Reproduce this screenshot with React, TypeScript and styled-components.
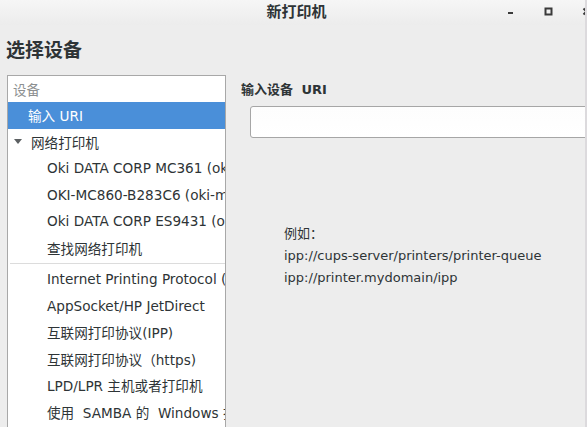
import styled, { createGlobalStyle } from "styled-components";

const GlobalStyle = createGlobalStyle`
  html, body {
    margin: 0;
    padding: 0;
    background: #ededed;
  }
  body {
    font-family: "DejaVu Sans", "Noto Sans CJK SC", sans-serif;
    color: #2e3436;
  }
`;

// 창 전체
const Window = styled.div`
  width: 587px;
  height: 427px;
  display: flex;
  flex-direction: column;
  overflow: hidden;
  background: #ededed;
  border-right: 2px solid #dcdadd;
  box-sizing: border-box;
`;

const TitleBar = styled.div`
  position: relative;
  height: 25px;
  flex-shrink: 0;
  display: flex;
  align-items: center;
  justify-content: center;
  background: linear-gradient(#f6f6f6, #ececec);
`;

const TitleText = styled.div`
  font-family: "Noto Sans CJK SC", sans-serif;
  font-size: 15px;
  font-weight: bold;
  color: #2e3436;
  margin-top: -4px;
  margin-left: 8px;
`;

const Controls = styled.div`
  position: absolute;
  right: -20px;
  top: 4px;
  display: flex;
  align-items: center;
`;

const ControlButton = styled.div`
  width: 37.5px;
  height: 14px;
  display: flex;
  align-items: center;
  justify-content: center;
`;

const Body = styled.div`
  flex: 1;
  min-height: 0;
  display: flex;
  flex-direction: column;
  padding: 0 0 0 7px;
`;

const Heading = styled.h1`
  margin: 9px 0 11px -1px;
  font-family: "Noto Sans CJK SC", sans-serif;
  font-size: 19px;
  font-weight: bold;
  line-height: 30px;
  color: #2e3436;
`;

const Columns = styled.div`
  flex: 1;
  min-height: 0;
  display: flex;
  gap: 15px;
`;

// 왼쪽 장치 목록
const DeviceList = styled.div`
  width: 219px;
  flex-shrink: 0;
  background: #fff;
  border: 1px solid #a8a8a8;
  border-bottom: none;
  box-sizing: border-box;
  overflow: hidden;
`;

const ListHeader = styled.div`
  height: 26px;
  display: flex;
  align-items: center;
  padding-left: 5px;
  font-family: "Noto Sans CJK SC", sans-serif;
  font-size: 13.5px;
  color: #8d9091;
`;

const Row = styled.div<{ $indent: number; $selected?: boolean }>`
  height: 26.5px;
  display: flex;
  align-items: center;
  padding-left: ${(p) => p.$indent}px;
  white-space: pre;
  font-size: 13.6px;
  background: ${(p) => (p.$selected ? "#4a8fd9" : "transparent")};
  color: ${(p) => (p.$selected ? "#fff" : "#2e3436")};
`;

const Expander = styled.span`
  display: inline-block;
  width: 0;
  height: 0;
  border-left: 4px solid transparent;
  border-right: 4px solid transparent;
  border-top: 5px solid #5c6062;
  margin-right: 9px;
`;

const Separator = styled.div`
  height: 1px;
  margin: 2px 0 2px 2px;
  background: #dcdcdc;
`;

// 오른쪽 URI 입력
const Panel = styled.div`
  flex: 1;
  min-width: 0;
  overflow: hidden;
`;

const FieldLabel = styled.div`
  height: 26px;
  display: flex;
  align-items: center;
  font-size: 13px;
  font-weight: bold;
  word-spacing: 4px;
  color: #2e3436;
`;

const UriInput = styled.div`
  margin: 5px 0 0 9px;
  width: 360px;
  height: 32px;
  box-sizing: border-box;
  background: linear-gradient(#fdfdfd, #ffffff);
  border: 1px solid #a6a6a6;
  border-radius: 3px;
`;

const Example = styled.div`
  margin: 85px 0 0 43px;
  font-size: 13px;
  line-height: 22px;
  color: #2e3436;
`;

const deviceRows = [
  "Oki DATA CORP MC361 (oki-mc361)",
  "OKI-MC860-B283C6 (oki-mc860)",
  "Oki DATA CORP ES9431 (oki-es9431)",
  "查找网络打印机",
];

const protocolRows = [
  "Internet Printing Protocol (ipp)",
  "AppSocket/HP JetDirect",
  "互联网打印协议(IPP)",
  "互联网打印协议（https)",
  "LPD/LPR 主机或者打印机",
  "使用  SAMBA 的  Windows 打印机",
];

function App() {
  return (
    <>
      <GlobalStyle />
      <Window>
        <TitleBar>
          <TitleText>新打印机</TitleText>
          <Controls>
            <ControlButton>
              <svg width="8" height="8" viewBox="0 0 8 8">
                <rect x="1" y="5" width="5" height="2" fill="#3a3a3a" />
              </svg>
            </ControlButton>
            <ControlButton>
              <svg width="9" height="9" viewBox="0 0 9 9">
                <rect x="1.5" y="1.5" width="6" height="6" fill="none" stroke="#3a3a3a" strokeWidth="2" />
              </svg>
            </ControlButton>
            <ControlButton>
              <svg width="9" height="9" viewBox="0 0 9 9">
                <path d="M1.5 1.5 L7.5 7.5 M7.5 1.5 L1.5 7.5" stroke="#3a3a3a" strokeWidth="2" />
              </svg>
            </ControlButton>
          </Controls>
        </TitleBar>
        <Body>
          <Heading>选择设备</Heading>
          <Columns>
            <DeviceList>
              <ListHeader>设备</ListHeader>
              <Row $indent={20} $selected>
                输入 URI
              </Row>
              <Row $indent={6}>
                <Expander />
                网络打印机
              </Row>
              {deviceRows.map((label, i) => (
                <Row key={i} $indent={39}>
                  {label}
                </Row>
              ))}
              <Separator />
              {protocolRows.map((label, i) => (
                <Row key={i} $indent={39}>
                  {label}
                </Row>
              ))}
            </DeviceList>
            <Panel>
              <FieldLabel>输入设备 URI</FieldLabel>
              <UriInput />
              <Example>
                <div>例如：</div>
                <div>ipp://cups-server/printers/printer-queue</div>
                <div>ipp://printer.mydomain/ipp</div>
              </Example>
            </Panel>
          </Columns>
        </Body>
      </Window>
    </>
  );
}

export default App;
